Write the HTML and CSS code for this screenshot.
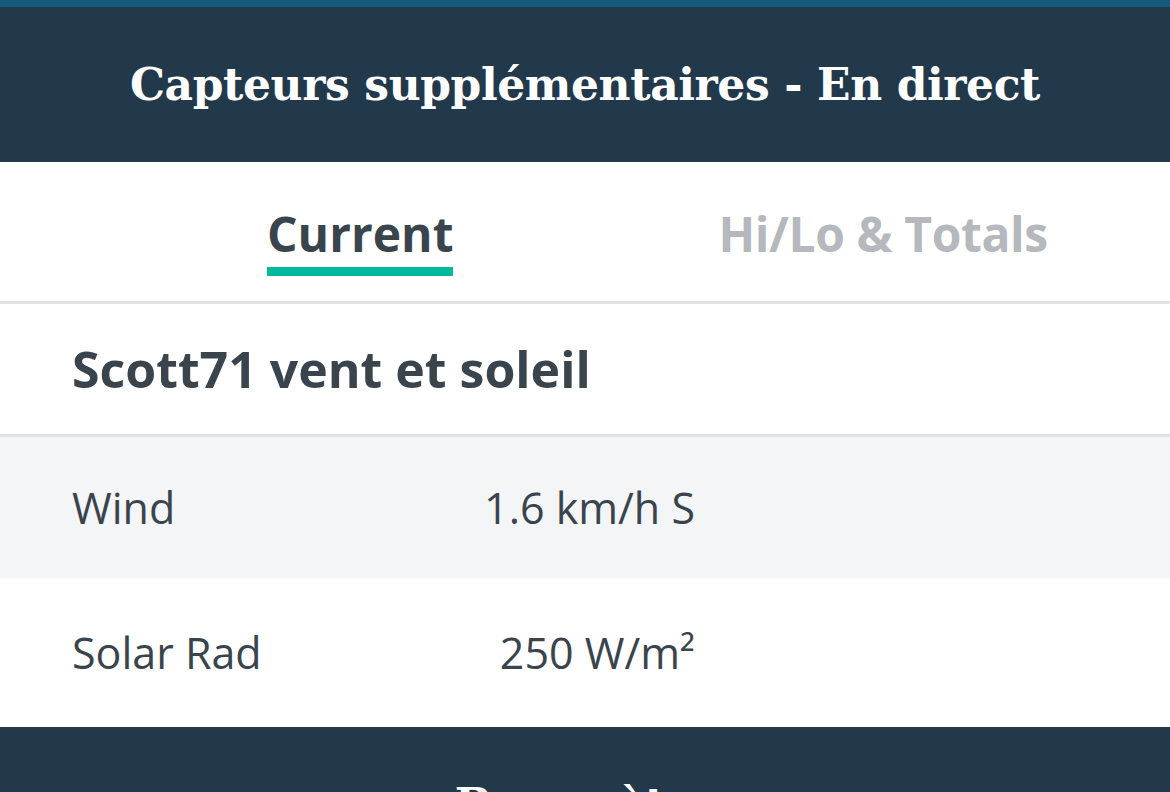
FILE: index.html
```html
<!DOCTYPE html>
<html>
<head>
<meta http-equiv="Content-Type" content="text/html; charset=utf-8"/>
<title>Capteurs supplémentaires - En direct</title>
<link rel="stylesheet" href="styles.css">
</head>
<body>
<div class="topline"></div>

<div class="banner">
  <h1>Capteurs supplémentaires - En direct</h1>
</div>

<div class="tabs">
  <div class="tab active">Current</div>
  <div class="tab">Hi/Lo &amp; Totals</div>
</div>

<div class="sensor">
  <h2>Scott71 vent et soleil</h2>
</div>

<div class="row shaded">
  <div class="label">Wind</div>
  <div class="value">1.6 km/h S</div>
</div>
<div class="row">
  <div class="label">Solar Rad</div>
  <div class="value">250 W/m²</div>
</div>

<div class="banner next">
  <h1>Baromètre</h1>
</div>
</body>
</html>
```

FILE: styles.css
```css
body {
  margin: 0;
  font-family: "Open Sans", sans-serif;
  color: #3a444d;
  background-color: white;
}

.topline {
  height: 7px;
  background-color: #145a7a;
}

.banner {
  background-color: #22384b;
  height: 155px;
  display: flex;
  align-items: center;
  justify-content: center;
}

.banner h1 {
  margin: 0;
  color: white;
  font-family: "DejaVu Serif", serif;
  font-weight: bold;
  font-size: 44px;
  letter-spacing: -0.4px;
}

.banner.next {
  height: 65px;
  align-items: flex-start;
  overflow: hidden;
}

.banner.next h1 {
  margin-top: 52px;
}

.tabs {
  display: flex;
  gap: 265px;
  padding-left: 267px;
  height: 139px;
  border-bottom: 3px solid #e1e3e6;
}

.tab {
  font-weight: bold;
  font-size: 48px;
  color: #b5b8bc;
  padding-top: 39px;
  letter-spacing: -0.4px;
}

.tab.active {
  color: #3a444d;
  height: 66px;
  letter-spacing: 0;
  border-bottom: 9px solid #00b89c;
}

.sensor {
  height: 130px;
  display: flex;
  align-items: center;
  padding-left: 72px;
  border-bottom: 3px solid #e1e3e6;
}

.sensor h2 {
  margin: 0;
  font-size: 50px;
  font-weight: bold;
}

.row {
  display: grid;
  grid-template-columns: 300px 323px;
  align-items: center;
  padding-left: 72px;
  height: 149px;
  font-size: 43px;
}

.row.shaded {
  background-color: #f4f5f7;
  height: 141px;
}

.row .value {
  text-align: right;
}
```
